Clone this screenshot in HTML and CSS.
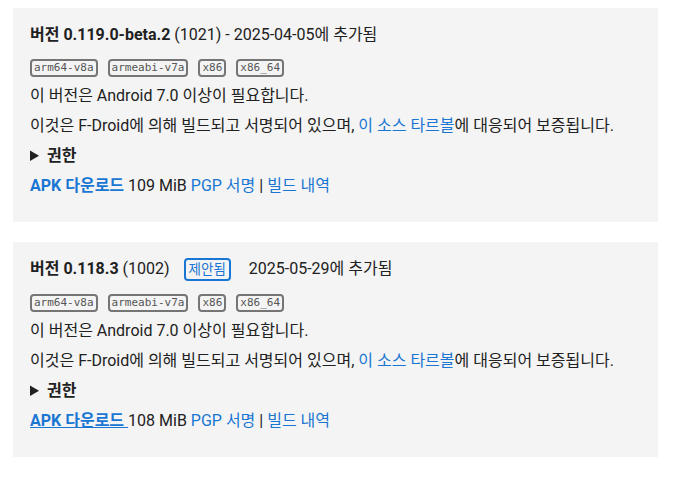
FILE: index.html
```html
<!DOCTYPE html>
<html lang="ko">
<head>
    <meta charset="UTF-8">
    <meta name="viewport" content="width=device-width, initial-scale=1.0">
    <title>F-Droid 패키지 버전</title>
    <link rel="stylesheet" href="styles.css">
</head>
<body>

    <ul class="versions">
        <li class="version">
            <div class="version-header">
                <b>버전 0.119.0-beta.2</b> (1021) - 2025-04-05에 추가됨
            </div>
            <div class="abis">
                <span class="abi">arm64-v8a</span>
                <span class="abi">armeabi-v7a</span>
                <span class="abi">x86</span>
                <span class="abi">x86_64</span>
            </div>
            <p>이 버전은 Android 7.0 이상이 필요합니다.</p>
            <p>이것은 F-Droid에 의해 빌드되고 서명되어 있으며, <a href="#">이 소스 타르볼</a>에 대응되어 보증됩니다.</p>
            <details class="permissions">
                <summary>권한</summary>
            </details>
            <p class="download">
                <a href="#" class="apk">APK 다운로드</a> 109 MiB
                <a href="#">PGP 서명</a> | <a href="#">빌드 내역</a>
            </p>
        </li>

        <li class="version">
            <div class="version-header">
                <b>버전 0.118.3</b> (1002) <span class="suggested">제안됨</span> 2025-05-29에 추가됨
            </div>
            <div class="abis">
                <span class="abi">arm64-v8a</span>
                <span class="abi">armeabi-v7a</span>
                <span class="abi">x86</span>
                <span class="abi">x86_64</span>
            </div>
            <p>이 버전은 Android 7.0 이상이 필요합니다.</p>
            <p>이것은 F-Droid에 의해 빌드되고 서명되어 있으며, <a href="#">이 소스 타르볼</a>에 대응되어 보증됩니다.</p>
            <details class="permissions">
                <summary>권한</summary>
            </details>
            <p class="download">
                <a href="#" class="apk hover">APK 다운로드 </a>108 MiB
                <a href="#">PGP 서명</a> | <a href="#">빌드 내역</a>
            </p>
        </li>
    </ul>

</body>
</html>
```

FILE: styles.css
```css
* {
    margin: 0;
    padding: 0;
    box-sizing: border-box;
}

body {
    font-family: Roboto, "Noto Sans CJK KR", sans-serif;
    font-size: 16px;
    line-height: 22px;
    color: #212121;
    background-color: #fff;
}

.versions {
    list-style: none;
    padding: 8px 16px 0 13px;
    display: flex;
    flex-direction: column;
    gap: 20px;
}

.version {
    background-color: #f4f4f4;
    padding: 16px 17px 25px 17px;
    display: flex;
    flex-direction: column;
    gap: 8px;
}

.version-header {
    margin-bottom: 5px;
}

.version-header b {
    font-weight: 700;
}

.suggested {
    display: inline-block;
    color: #1976d2;
    border: 2px solid #1976d2;
    border-radius: 4px;
    padding: 0 3px;
    line-height: 19px;
    font-size: 13.5px;
    margin: 0 14px 0 10px;
}

.abis {
    display: flex;
    gap: 10px;
}

.abi {
    font-family: "DejaVu Sans Mono", monospace;
    font-size: 11px;
    line-height: 14px;
    color: #555;
    border: 2px solid #757575;
    border-radius: 4px;
    padding: 0 2px;
}

a {
    color: #1976d2;
    text-decoration: none;
}

a.hover {
    text-decoration: underline;
}

.permissions summary {
    font-weight: 700;
    cursor: pointer;
}

.download .apk {
    font-weight: 700;
}
```
